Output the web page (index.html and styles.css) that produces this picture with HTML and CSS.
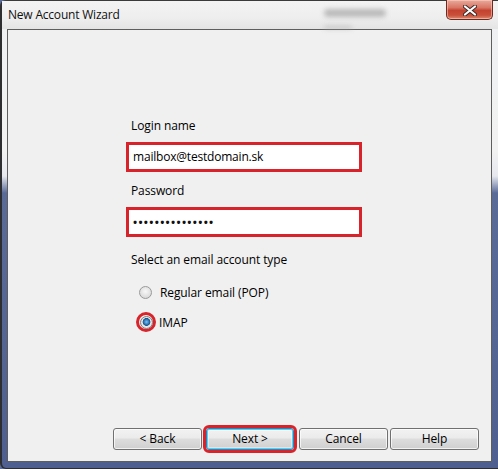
FILE: index.html
```html
<!DOCTYPE html>
<html>
<head>
<meta charset="utf-8">
<link rel="stylesheet" href="styles.css">
</head>
<body>
<div class="window">
  <div class="titlebar">
    <span class="title">New Account Wizard</span>
    <span class="blur blur1"></span>
    <span class="blur blur2"></span>
    <button class="close" aria-label="Close">
      <svg width="14" height="11" viewBox="0 0 14 11"><path d="M2 1.5 L12 9.5 M12 1.5 L2 9.5" stroke="#3a2a2a" stroke-width="4" stroke-linecap="round"/><path d="M2 1.5 L12 9.5 M12 1.5 L2 9.5" stroke="#ffffff" stroke-width="2.2" stroke-linecap="round"/></svg>
    </button>
  </div>
  <div class="panel">
    <div class="form">
      <div class="label">Login name</div>
      <div class="field hl">mailbox@testdomain.sk</div>
      <div class="label l-pass">Password</div>
      <div class="field hl pass">•••••••••••••••</div>
      <div class="label l-type">Select an email account type</div>
      <div class="radio-row r-pop"><span class="radio"></span><span class="rtext">Regular email (POP)</span></div>
      <div class="radio-row r-imap"><span class="ring"><span class="radio on"></span></span><span class="rtext">IMAP</span></div>
    </div>
    <div class="buttons">
      <button class="btn b-back">&lt; Back</button>
      <button class="btn b-next">Next &gt;</button>
      <button class="btn b-cancel">Cancel</button>
      <button class="btn b-help">Help</button>
    </div>
  </div>
</div>
</body>
</html>
```
FILE: styles.css
```css
html, body {
  margin: 0;
  padding: 0;
  width: 498px;
  height: 469px;
  overflow: hidden;
  background: #5b6c98;
}
.window {
  width: 498px;
  height: 469px;
  box-sizing: border-box;
  border-left: 2px solid #2e2e30;
  border-top: 1px solid #3a3a3a;
  border-bottom: 1px solid #2e2e30;
  border-radius: 6px 0 0 6px;
  background: linear-gradient(to bottom, #eef0f2 0, #f2f2f2 150px, #e6e8ee 175px, #5a6b98 192px, #4f6090 100%);
  display: flex;
  flex-direction: column;
  padding: 0 0 0 5px;
  font-family: "Open Sans", "Noto Sans", sans-serif;
  font-size: 12px;
  color: #000;
}
.titlebar {
  position: relative;
  height: 28px;
  flex: none;
  background: linear-gradient(to bottom, #f3f3f3, #eeeeee 60%, #e4e4e4);
  margin-left: -5px;
  padding-left: 5px;
}
.title {
  position: relative;
  z-index: 1;
  display: block;
  padding: 6px 0 0 1px;
  font-size: 12px;
  line-height: 16px;
  letter-spacing: -0.2px;
  color: #111;
}
.blur {
  position: absolute;
  background: #a8a8a8;
  filter: blur(2.5px);
  border-radius: 4px;
}
.blur1 { left: 322px; top: 8px; width: 62px; height: 8px; opacity: .75; }
.blur2 { left: 322px; top: 25px; width: 28px; height: 3px; opacity: .6; }
.close {
  position: absolute;
  left: 444px;
  top: -1px;
  width: 47px;
  height: 20px;
  border: 1px solid #6d2a22;
  border-top: none;
  border-radius: 0 0 5px 5px;
  background: linear-gradient(to bottom, #e9a99b 0%, #d97664 40%, #c34330 55%, #c9503a 80%, #dd8a70 100%);
  box-shadow: inset 0 0 0 1px rgba(255,220,210,.5);
  padding: 0;
  display: flex;
  align-items: center;
  justify-content: center;
}
.close svg { margin-top: 1px; }
.panel {
  width: 485px;
  height: 433px;
  box-sizing: border-box;
  border: 1px solid #5e5e5e;
  background: #f0f0f0;
  display: flex;
  flex-direction: column;
}
.form {
  padding: 88px 0 0 118px;
  display: flex;
  flex-direction: column;
  align-items: flex-start;
}
.label {
  line-height: 15px;
  padding-left: 5px;
  height: 15px;
  letter-spacing: -0.1px;
}
.field {
  box-sizing: border-box;
  width: 236px;
  height: 30px;
  margin-top: 9px;
  background: #fff;
  border: 3px solid #d8232b;
  padding: 0 0 0 4px;
  line-height: 24px;
  letter-spacing: -0.2px;
}
.pass {
  font-size: 11px;
  font-weight: bold;
  letter-spacing: 1.3px;
  line-height: 23px;
  color: #111;
}
.l-pass { margin-top: 11px; }
.l-type { margin-top: 15px; }
.radio-row {
  display: flex;
  align-items: center;
  height: 20px;
  letter-spacing: -0.1px;
}
.r-pop { margin-top: 15px; padding-left: 13px; }
.r-pop .rtext { margin-left: 8px; }
.r-imap { margin-top: 10px; padding-left: 10px; }
.r-imap .rtext { margin-left: 3px; }
.radio {
  width: 13px;
  height: 13px;
  box-sizing: border-box;
  border-radius: 50%;
  border: 1px solid #9a9a9a;
  background: radial-gradient(circle at 50% 40%, #f8f8f8 0, #e6e6e6 45%, #cfcfcf 100%);
  display: block;
}
.ring {
  width: 20px;
  height: 20px;
  box-sizing: border-box;
  border-radius: 50%;
  border: 3px solid #d8232b;
  display: flex;
  align-items: center;
  justify-content: center;
}
.radio.on {
  background: radial-gradient(circle at 50% 45%, #7cc3f0 0, #2f7bbf 2.4px, #1c5586 3.6px, #e8e8e8 4.2px, #d8d8d8 100%);
  border-color: #7d7d7d;
}
.buttons {
  margin-top: auto;
  display: flex;
  padding: 0 0 11px 105px;
}
.btn {
  width: 89px;
  height: 22px;
  box-sizing: border-box;
  border: 1px solid #707070;
  border-radius: 3px;
  background: linear-gradient(to bottom, #f2f2f2 0, #ebebeb 45%, #dddddd 50%, #cfcfcf 100%);
  box-shadow: inset 0 0 0 1px rgba(255,255,255,.7);
  font-family: "Open Sans", "Noto Sans", sans-serif;
  font-size: 12px;
  letter-spacing: -0.1px;
  color: #000;
  padding: 0;
  line-height: 18px;
}
.b-next {
  width: 88px;
  margin-left: 4px;
  border-color: #3c7fb1;
  box-shadow: inset 0 0 0 1px #48d7fb, inset 0 0 0 2px rgba(255,255,255,.4);
  outline: 3px solid #d8232b;
  outline-offset: 0;
}
.b-cancel { margin-left: 5px; }
.b-help { margin-left: 2px; }
```
